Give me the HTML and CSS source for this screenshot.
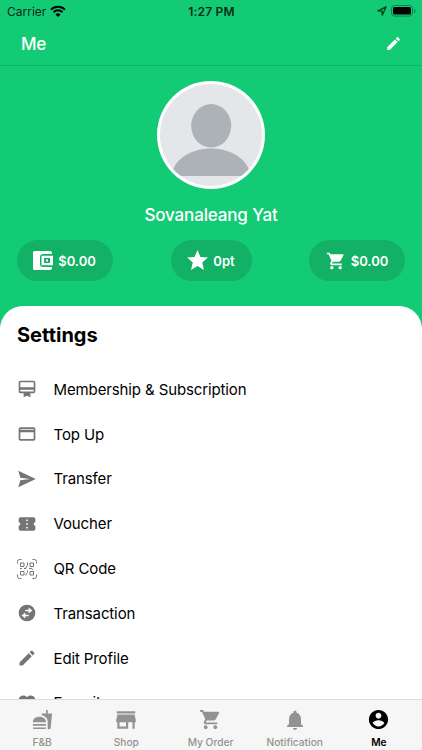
FILE: index.html
```html
<!DOCTYPE html>
<html lang="en">
<head>
<meta charset="utf-8">
<title>Me</title>
<link rel="stylesheet" href="styles.css">
</head>
<body>
<svg class="defs" aria-hidden="true">
  <symbol id="pencil" viewBox="0 0 24 24"><path d="M3 17.25V21h3.75L17.81 9.94l-3.75-3.75L3 17.25zM20.71 7.04a1 1 0 0 0 0-1.41l-2.34-2.34a1 1 0 0 0-1.41 0l-1.83 1.83 3.75 3.75 1.83-1.83z"/></symbol>
  <symbol id="cart" viewBox="0 0 24 24"><path d="M7 18c-1.1 0-1.99.9-1.99 2S5.9 22 7 22s2-.9 2-2-.9-2-2-2zM1 2v2h2l3.6 7.59-1.35 2.45c-.16.28-.25.61-.25.96 0 1.1.9 2 2 2h12v-2H7.42c-.14 0-.25-.11-.25-.25l.03-.12.9-1.63h7.45c.75 0 1.41-.41 1.75-1.03l3.58-6.49A1 1 0 0 0 20 4H5.21l-.94-2H1zm16 16c-1.1 0-1.99.9-1.99 2s.89 2 1.99 2 2-.9 2-2-.9-2-2-2z"/></symbol>
</svg>
<div class="screen">
  <header class="status">
    <div class="carrier"><span>Carrier</span>
      <svg class="wifi" viewBox="0 0 16 12"><path d="M8 12 5.5 9.4a3.6 3.6 0 0 1 5 0z"/><path class="arc" d="M3.5 7.2a6.4 6.4 0 0 1 9 0M1 4.6a9.9 9.9 0 0 1 14 0"/></svg>
    </div>
    <div class="time">1:27 PM</div>
    <div class="power">
      <svg class="location" viewBox="0 0 10 10"><path d="M.9 4.9 9 1 5.3 9.1 5 5.1z"/></svg>
      <svg class="battery" viewBox="0 0 25 12"><rect class="case" x=".5" y=".5" width="21" height="10.6" rx="3"/><rect x="2" y="2" width="18" height="7.6" rx="1.6"/><path class="tip" d="M23 4v4q1.5-.6 1.5-2T23 4z"/></svg>
    </div>
  </header>
  <nav class="navbar"><h1>Me</h1><svg class="edit"><use href="#pencil"/></svg></nav>
  <section class="profile">
    <svg class="avatar" viewBox="0 0 108 108">
      <clipPath id="face"><circle cx="54" cy="54" r="51"/></clipPath>
      <circle cx="54" cy="54" r="54" fill="#fff"/><circle cx="54" cy="54" r="51" fill="#e4e6e9"/>
      <g clip-path="url(#face)" fill="#adb2b6"><ellipse cx="54.2" cy="44.8" rx="20" ry="21.7"/><path d="M14 95C17 78 34 67.5 54 67.5S91 78 94 95z"/></g>
    </svg>
    <div class="name">Sovanaleang Yat</div>
    <div class="pills">
      <div class="pill wide"><svg class="wallet" viewBox="0 0 20 19"><path d="M1.500 0H17a2 2 0 0 1 2 2v1H10a3 3 0 0 0-3 3v7a3 3 0 0 0 3 3h9v1a2 2 0 0 1-2 2H1.500A1.500 1.500 0 0 1 0 17.500V1.500A1.500 1.500 0 0 1 1.500 0z"/><path fill-rule="evenodd" d="M8.500 4.700H20v9.600H8.500zM11 7v5h6V7z"/><rect x="13" y="8.500" width="2" height="2"/></svg><span>$0.00</span></div>
      <div class="pill points"><svg class="star" viewBox="0 0 24 24"><path d="M12 17.270 18.180 21l-1.640-7.030L22 9.240l-7.190-.610L12 2 9.190 8.630 2 9.240l5.460 4.730L5.820 21z"/></svg><span>0pt</span></div>
      <div class="pill wide"><svg class="basket"><use href="#cart"/></svg><span>$0.00</span></div>
    </div>
  </section>
  <main class="sheet">
    <h2>Settings</h2>
    <ul>
      <li><svg viewBox="0 0 24 24"><path d="M20 2H4c-1.110 0-2 .890-2 2v11c0 1.110.890 2 2 2h4v5l4-2 4 2v-5h4c1.110 0 2-.890 2-2V4c0-1.110-.890-2-2-2zm0 13H4v-2h16v2zm0-5H4V4h16v6z"/></svg><span>Membership &amp; Subscription</span></li>
      <li><svg viewBox="0 0 24 24"><path d="M20 4H4c-1.110 0-2 .890-2 2v12c0 1.110.890 2 2 2h16c1.110 0 2-.890 2-2V6c0-1.110-.890-2-2-2zm0 14H4v-8h16v8zm0-11H4V6h16v1z"/></svg><span>Top Up</span></li>
      <li><svg viewBox="0 0 24 24"><path d="M1.500 22 22.500 12 1.500 2l2.500 8.500 12 1.500-12 1.500z"/></svg><span>Transfer</span></li>
      <li><svg viewBox="0 0 24 24"><path d="M22 10V6a2 2 0 0 0-2-2H4a2 2 0 0 0-2 2v4a2 2 0 0 1 0 4v4a2 2 0 0 0 2 2h16a2 2 0 0 0 2-2v-4a2 2 0 0 1 0-4zm-9 7.500h-2v-2h2v2zm0-4.500h-2v-2h2v2zm0-4.500h-2v-2h2v2z"/></svg><span>Voucher</span></li>
      <li><svg class="qr" viewBox="0 0 20 20"><path d="M.500 4.500v-2a2 2 0 0 1 2-2h2M15.500.500h2a2 2 0 0 1 2 2v2M19.500 15.500v2a2 2 0 0 1-2 2h-2M4.500 19.500h-2a2 2 0 0 1-2-2v-2M3.500 4h3.500v3.500H3.500zM13 4h3.500v3.500H13zM3.500 12.500h3.500v3.500H3.500zM13 12.500h3.500v3.500H13zM10.500 3.500v3L9 8v1.500H7M3 9.500h2M12 9.500h2l2 1M10.500 11.500v2L9 15v1.500"/></svg><span>QR Code</span></li>
      <li><svg viewBox="0 0 24 24"><path fill-rule="evenodd" d="M12 2a10 10 0 1 0 0 20 10 10 0 0 0 0-20zM14 5.500l4.500 3.500-4.500 3.500v-2.500h-4v-2h4zM10 11.500v2.500h4v2h-4v2.500L5.500 15z"/></svg><span>Transaction</span></li>
      <li><svg><use href="#pencil"/></svg><span>Edit Profile</span></li>
      <li><svg viewBox="0 0 24 24"><path d="m12 21-1.450-1.320C5.400 15.360 2 12.280 2 8.500 2 5.420 4.420 3 7.500 3c1.740 0 3.410.810 4.500 2.090C13.090 3.810 14.760 3 16.500 3 19.580 3 22 5.420 22 8.500c0 3.780-3.400 6.860-8.550 11.180z"/></svg><span>Favorite</span></li>
    </ul>
  </main>
  <footer class="tabs">
    <div class="tab"><div class="glyph"><svg class="food" viewBox="0 0 24 24"><path d="M1 21.980c0 .560.450 1.010 1.010 1.010H15c.560 0 1.010-.450 1.010-1.010V21H1v.980zM8.500 8.990C4.750 8.990 1 11 1 15h15c0-4-3.750-6.010-7.500-6.010zM1 17h15v2H1zM18 5V1h-2v4h-5l.230 2c1.710.470 3.310 1.320 4.270 2.260 1.440 1.420 2.430 2.890 2.430 5.290V23h1.790c.840 0 1.530-.650 1.630-1.470L23 5z"/></svg></div><span>F&amp;B</span></div>
    <div class="tab"><div class="glyph"><svg class="store" viewBox="0 0 24 24"><path d="M20.500 4h-17v2h17V4zm.500 10v-2l-1-5H4l-1 5v2h1v6h10v-6h4v6h2v-6h1zm-9 4H6v-4h6v4z"/></svg></div><span>Shop</span></div>
    <div class="tab"><div class="glyph"><svg class="order"><use href="#cart"/></svg></div><span>My Order</span></div>
    <div class="tab"><div class="glyph"><svg class="bell" viewBox="0 0 24 24"><path d="M12 22c1.100 0 2-.900 2-2h-4a2 2 0 0 0 2 2zm6-6v-5c0-3.070-1.640-5.640-4.500-6.320V4a1.500 1.500 0 0 0-3 0v.680C7.630 5.360 6 7.920 6 11v5l-2 2v1h16v-1z"/></svg></div><span>Notification</span></div>
    <div class="tab active"><div class="glyph"><svg class="person" viewBox="0 0 24 24"><path d="M12 2C6.480 2 2 6.480 2 12s4.480 10 10 10 10-4.480 10-10S17.520 2 12 2zm0 3c1.660 0 3 1.340 3 3s-1.340 3-3 3-3-1.340-3-3 1.340-3 3-3zm0 14.200a7.200 7.200 0 0 1-6-3.220c.030-1.990 4-3.080 6-3.080 1.990 0 5.970 1.090 6 3.080a7.200 7.200 0 0 1-6 3.220z"/></svg></div><span>Me</span></div>
  </footer>
</div>
</body>
</html>
```
FILE: styles.css
```css
* { box-sizing: border-box; }
body { margin: 0; font-family: Inter, "Liberation Sans", sans-serif; overflow: hidden; }
h1, h2, ul { margin: 0; padding: 0; }
svg { display: block; flex: none; fill: currentColor; }
.defs { display: none; }
.screen { width: 422px; height: 750px; display: flex; flex-direction: column; overflow: hidden; background: #14cb75; }
.status { height: 22px; flex: none; display: grid; grid-template-columns: 1fr auto 1fr; align-items: center; padding: 0 6px 0 7px; color: #062c18; font-size: 12px; }
.carrier, .power { display: flex; align-items: center; gap: 4px; }
.wifi { width: 16px; height: 12px; color: #000; }
.arc { fill: none; stroke: currentColor; stroke-width: 2; }
.time { font-weight: 600; letter-spacing: .2px; }
.power { justify-content: flex-end; color: #000; }
.location { width: 10px; height: 10px; fill: none; stroke: #042; stroke-width: 1.400; stroke-linejoin: round; }
.battery { width: 25px; height: 12px; }
.case { fill: none; stroke: #0c8149; }
.tip { fill: #0c8149; }
.navbar { height: 44px; flex: none; display: flex; align-items: center; justify-content: space-between; padding: 0 20px 0 21px; border-bottom: 1px solid #11b568; color: #fff; }
.navbar h1 { font-size: 17px; line-height: 20px; font-weight: 500; letter-spacing: -.3px; }
.edit { width: 17px; height: 17px; margin-bottom: 1px; }
.profile { height: 240px; flex: none; padding: 15px 17px 0; display: flex; flex-direction: column; align-items: center; color: #fff; }
.avatar { width: 108px; height: 108px; }
.name { margin-top: 15px; line-height: 22px; font-size: 17px; font-weight: 500; letter-spacing: -.15px; white-space: nowrap; }
.pills { margin-top: 14px; align-self: stretch; display: flex; justify-content: space-between; }
.pill { height: 41px; border-radius: 21px; background: #12b166; display: flex; align-items: center; justify-content: center; gap: 5px; font-size: 13px; font-weight: 600; }
.wide { width: 96px; }
.wide:first-child { padding-right: 1px; }
.points { width: 81px; gap: 3px; padding-right: 2px; }
.wallet { width: 20px; height: 19px; }
.star { width: 25px; height: 25px; }
.basket { width: 20px; height: 20px; }
.sheet { flex: 1; min-height: 0; overflow: hidden; background: #fff; border-radius: 23px 23px 0 0; padding: 15px 17px 0; color: #000; }
.sheet h2 { height: 27px; line-height: 28px; font-size: 20px; font-weight: 700; }
.sheet ul { padding-top: 19px; list-style: none; }
.sheet li { height: 44.800px; display: flex; align-items: center; gap: 16.500px; font-size: 15px; letter-spacing: -.12px; white-space: nowrap; }
.sheet li svg { width: 20px; height: 20px; color: #757575; }
.sheet li .qr { fill: none; stroke: currentColor; stroke-width: 1; }
.tabs { height: 51px; flex: none; display: flex; padding-right: 1px; background: #f6f6f6; border-top: 1px solid #dcdcdc; color: #929292; }
.tab { flex: 1; padding-top: 8px; display: flex; flex-direction: column; align-items: center; gap: 4px; font-size: 10.200px; line-height: 14px; font-weight: 500; white-space: nowrap; }
.glyph { height: 23px; display: flex; align-items: center; justify-content: center; }
.food { width: 21px; height: 21px; }
.store { width: 26px; height: 26px; }
.order, .person { width: 23px; height: 23px; }
.bell { width: 24px; height: 24px; }
.active { color: #000; font-weight: 600; }
```
